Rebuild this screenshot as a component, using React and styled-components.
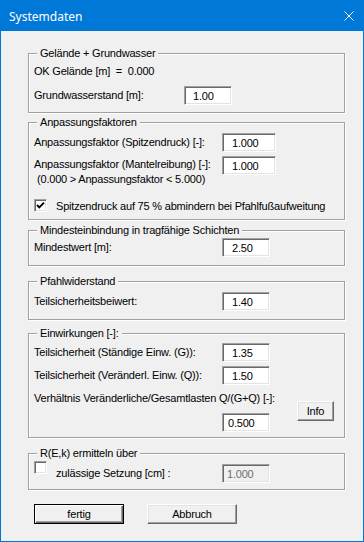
import styled, { createGlobalStyle } from "styled-components";

const GlobalStyle = createGlobalStyle`
  html, body {
    margin: 0;
    padding: 0;
    background: #ffffff;
  }
  body {
    font-family: "Liberation Sans", Arial, sans-serif;
    font-size: 11px;
    color: #000000;
  }
`;

const Fenster = styled.div`
  width: 364px;
  height: 542px;
  box-sizing: border-box;
  border: 1px solid #0078d7;
  background: #f0f0f0;
  display: flex;
  flex-direction: column;
`;

const TitelLeiste = styled.div`
  height: 30px;
  flex-shrink: 0;
  background: #0078d7;
  color: #ffffff;
  font-family: "Noto Sans", "Open Sans", sans-serif;
  font-size: 12px;
  display: flex;
  align-items: center;
  justify-content: space-between;
  padding: 0 9px 0 8px;
`;

const Inhalt = styled.div`
  padding: 22px 0 0 27px;
  display: flex;
  flex-direction: column;
  letter-spacing: -0.2px;
`;

const Gruppe = styled.div`
  position: relative;
  box-sizing: border-box;
  width: 317px;
  height: ${(p) => p.$h}px;
  margin-top: ${(p) => p.$mt || 0}px;
  border: 1px solid #a0a0a0;
  box-shadow: inset 1px 1px 0 #ffffff, 1px 1px 0 #ffffff;
  padding-left: 5px;
`;

const GruppenTitel = styled.span`
  position: absolute;
  top: -7px;
  left: 8px;
  padding: 0 3px;
  line-height: 13px;
  background: #f0f0f0;
  white-space: nowrap;
`;

const Zeile = styled.div`
  display: flex;
  align-items: ${(p) => p.$align || "center"};
  min-height: ${(p) => p.$h || 19}px;
  margin-top: ${(p) => p.$mt || 0}px;
`;

const Beschriftung = styled.div`
  width: ${(p) => p.$w || 188}px;
  flex-shrink: 0;
  white-space: nowrap;
  line-height: ${(p) => p.$lh || 19}px;
  padding-top: ${(p) => p.$pt || 0}px;
`;

const Hinweis = styled.div`
  padding-left: 3px;
`;

const Eingabe = styled.input`
  box-sizing: border-box;
  width: ${(p) => p.$w || 48}px;
  height: 19px;
  margin: 0;
  padding: 0 0 0 ${(p) => (p.$pad ?? 8)}px;
  border: 1px solid;
  border-color: #a0a0a0 #ffffff #ffffff #a0a0a0;
  box-shadow: inset 1px 1px 0 #696969, inset -1px -1px 0 #e3e3e3;
  background: ${(p) => (p.disabled ? "#f0f0f0" : "#ffffff")};
  color: ${(p) => (p.disabled ? "#6d6d6d" : "#000000")};
  font-family: inherit;
  font-size: 11px;
  letter-spacing: -0.2px;
  outline: none;
  flex-shrink: 0;
`;

const KastenFeld = styled.span`
  box-sizing: border-box;
  width: 13px;
  height: 13px;
  flex-shrink: 0;
  margin-top: ${(p) => p.$mt || 0}px;
  margin-right: 9px;
  border: 1px solid;
  border-color: #a0a0a0 #ffffff #ffffff #a0a0a0;
  box-shadow: inset 1px 1px 0 #696969, inset -1px -1px 0 #e3e3e3;
  background: #ffffff;
  display: flex;
  align-items: center;
  justify-content: center;
  align-self: ${(p) => p.$self || "center"};
`;

const Knopf = styled.button`
  box-sizing: border-box;
  width: ${(p) => p.$w || 90}px;
  height: 20px;
  margin: ${(p) => p.$mt || 0}px 0 0 ${(p) => p.$ml || 0}px;
  padding: 0;
  background: #f0f0f0;
  font-family: inherit;
  font-size: 11px;
  letter-spacing: -0.2px;
  color: #000000;
  border: 1px solid;
  border-color: ${(p) =>
    p.$standard ? "#000000" : "#ffffff #696969 #696969 #ffffff"};
  box-shadow: ${(p) =>
    p.$standard
      ? "inset 1px 1px 0 #ffffff, inset -1px -1px 0 #696969, inset -2px -2px 0 #a0a0a0"
      : "inset -1px -1px 0 #a0a0a0, inset 1px 1px 0 #e3e3e3"};
  flex-shrink: 0;
`;

const VerhaeltnisBlock = styled.div`
  width: 250px;
  display: flex;
  flex-direction: column;
`;

const SetzungsBeschriftung = styled(Beschriftung)`
  display: flex;
  align-items: center;
`;

const KnopfZeile = styled.div`
  display: flex;
  margin: 14px 0 0 6px;
`;

const Schliessen = () => (
  <svg width="10" height="10" viewBox="0 0 10 10">
    <path d="M0.5 0.5 L9.5 9.5 M9.5 0.5 L0.5 9.5" stroke="#ffffff" strokeWidth="1" />
  </svg>
);

const Haken = () => (
  <svg width="9" height="9" viewBox="0 0 9 9">
    <path d="M1 4 L3.3 6.4 L8 1.6" stroke="#000000" strokeWidth="1.9" fill="none" />
  </svg>
);

export default function App() {
  return (
    <>
      <GlobalStyle />
      <Fenster>
        <TitelLeiste>
          <span>Systemdaten</span>
          <Schliessen />
        </TitelLeiste>
        <Inhalt>
          <Gruppe $h={60}>
            <GruppenTitel>Gelände + Grundwasser</GruppenTitel>
            <Zeile $mt={8}>
              <Beschriftung>OK Gelände [m]&nbsp; = &nbsp;0.000</Beschriftung>
            </Zeile>
            <Zeile $mt={5}>
              <Beschriftung $w={150}>Grundwasserstand [m]:</Beschriftung>
              <Eingabe defaultValue="1.00" />
            </Zeile>
          </Gruppe>

          <Gruppe $h={98} $mt={9}>
            <GruppenTitel>Anpassungsfaktoren</GruppenTitel>
            <Zeile $mt={10}>
              <Beschriftung>Anpassungsfaktor (Spitzendruck) [-]:</Beschriftung>
              <Eingabe $w={54} $pad={9} defaultValue="1.000" />
            </Zeile>
            <Zeile $mt={4} $align="flex-start">
              <Beschriftung $lh={15} $pt={1}>
                Anpassungsfaktor (Mantelreibung) [-]:
                <Hinweis>(0.000 &gt; Anpassungsfaktor &lt; 5.000)</Hinweis>
              </Beschriftung>
              <Eingabe $w={54} $pad={9} defaultValue="1.000" />
            </Zeile>
            <Zeile $mt={9}>
              <KastenFeld>
                <Haken />
              </KastenFeld>
              <span>Spitzendruck auf 75 % abmindern bei Pfahlfußaufweitung</span>
            </Zeile>
          </Gruppe>

          <Gruppe $h={36} $mt={10}>
            <GruppenTitel>Mindesteinbindung in tragfähige Schichten</GruppenTitel>
            <Zeile $mt={7}>
              <Beschriftung>Mindestwert [m]:</Beschriftung>
              <Eingabe $pad={9} defaultValue="2.50" />
            </Zeile>
          </Gruppe>

          <Gruppe $h={39} $mt={15}>
            <GruppenTitel>Pfahlwiderstand</GruppenTitel>
            <Zeile $mt={10}>
              <Beschriftung>Teilsicherheitsbeiwert:</Beschriftung>
              <Eingabe $pad={9} defaultValue="1.40" />
            </Zeile>
          </Gruppe>

          <Gruppe $h={105} $mt={13}>
            <GruppenTitel>Einwirkungen [-]:</GruppenTitel>
            <Zeile $mt={9}>
              <Beschriftung>Teilsicherheit (Ständige Einw. (G)):</Beschriftung>
              <Eingabe $pad={9} defaultValue="1.35" />
            </Zeile>
            <Zeile $mt={4}>
              <Beschriftung>Teilsicherheit (Veränderl. Einw. (Q)):</Beschriftung>
              <Eingabe $pad={9} defaultValue="1.50" />
            </Zeile>
            <Zeile $mt={4} $align="flex-start">
              <VerhaeltnisBlock>
                <Beschriftung $w={250}>
                  Verhältnis Veränderliche/Gesamtlasten Q/(G+Q) [-]:
                </Beschriftung>
                <Zeile $mt={5}>
                  <Beschriftung />
                  <Eingabe $pad={5} defaultValue="0.500" />
                </Zeile>
              </VerhaeltnisBlock>
              <Knopf $w={37} $ml={13} $mt={12}>
                Info
              </Knopf>
            </Zeile>
          </Gruppe>

          <Gruppe $h={37} $mt={15}>
            <GruppenTitel>R(E,k) ermitteln über</GruppenTitel>
            <Zeile $mt={10}>
              <SetzungsBeschriftung>
                <KastenFeld $self="flex-start" $mt={-3} />
                <span>zulässige Setzung [cm] :</span>
              </SetzungsBeschriftung>
              <Eingabe $pad={4} disabled defaultValue="1.000" />
            </Zeile>
          </Gruppe>

          <KnopfZeile>
            <Knopf $standard>fertig</Knopf>
            <Knopf $ml={23}>Abbruch</Knopf>
          </KnopfZeile>
        </Inhalt>
      </Fenster>
    </>
  );
}
